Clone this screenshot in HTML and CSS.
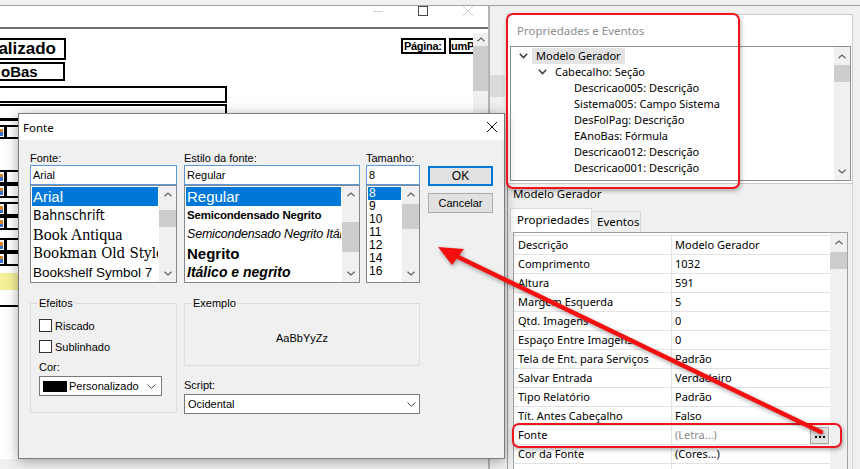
FILE: index.html
```html
<!DOCTYPE html>
<html lang="pt-BR">
<head>
<meta charset="utf-8">
<title>Fonte</title>
<link rel="stylesheet" href="styles.css">
</head>
<body>
<div class="screen">
  <div class="topstrip"></div>
  <div class="workspace">
    <section class="designer">
      <header class="win-title">
        <svg class="wc" viewBox="0 0 10 10"><line x1="0" y1="5.5" x2="10" y2="5.5"/></svg>
        <svg class="wc wc-max" viewBox="0 0 10 10"><rect x="0.5" y="0.5" width="9" height="9"/></svg>
        <svg class="wc" viewBox="0 0 10 10"><line x1="0" y1="0" x2="10" y2="10"/><line x1="10" y1="0" x2="0" y2="10"/></svg>
      </header>
      <div class="designer-body">
        <div class="canvas">
          <div class="fld f-title">alizado</div>
          <div class="fld f-sub">oBas</div>
          <div class="fld f-wide f-wide1"></div>
          <div class="fld f-wide f-wide2"></div>
          <div class="fld f-pag">Página:</div>
          <div class="fld f-ump">umP</div>
          <div class="fld f-ic r1"><i></i></div><div class="fld f-bx r1"></div>
          <div class="fld f-hline h1"></div>
          <div class="fld f-ic r2"><i></i></div><div class="fld f-bx r2"></div>
          <div class="fld f-ic r3"><i></i></div><div class="fld f-bx r3"></div>
          <div class="fld f-ic r4"><i></i></div><div class="fld f-bx r4"></div>
          <div class="fld f-ic r5"><i></i></div><div class="fld f-bx r5"></div>
          <div class="fld f-ic r6"><i></i></div><div class="fld f-bx r6"></div>
          <div class="fld f-ic r7"><i></i></div><div class="fld f-bx r7"></div>
          <div class="fld f-yellow"></div>
          <div class="fld f-hline h2"></div>
        </div>
        <div class="vscroll">
          <span class="sb-arrow d-arrow"><svg class="chev" viewBox="0 0 9 5"><polyline points="0.5,4.5 4.5,0.8 8.5,4.5"/></svg></span>
          <span class="sb-thumb d-thumb"></span>
        </div>
      </div>
      <div class="hscroll"></div>
    </section>

    <div class="gutter"><div class="gutter-band"></div></div>

    <aside class="props">
      <div class="pe-box">
        <div class="pe-title">Propriedades e Eventos</div>
        <div class="tree">
          <ul class="tree-list">
            <li class="tree-row lv0"><span class="tw"><svg class="tchev" viewBox="0 0 9 6"><polyline points="0.8,0.8 4.5,4.6 8.2,0.8"/></svg></span><span class="tree-label sel">Modelo Gerador</span></li>
            <li class="tree-row lv1"><span class="tw"><svg class="tchev" viewBox="0 0 9 6"><polyline points="0.8,0.8 4.5,4.6 8.2,0.8"/></svg></span><span class="tree-label">Cabecalho: Seção</span></li>
            <li class="tree-row lv2"><span class="tw"></span><span class="tree-label">Descricao005: Descrição</span></li>
            <li class="tree-row lv2"><span class="tw"></span><span class="tree-label">Sistema005: Campo Sistema</span></li>
            <li class="tree-row lv2"><span class="tw"></span><span class="tree-label">DesFolPag: Descrição</span></li>
            <li class="tree-row lv2"><span class="tw"></span><span class="tree-label">EAnoBas: Fórmula</span></li>
            <li class="tree-row lv2"><span class="tw"></span><span class="tree-label">Descricao012: Descrição</span></li>
            <li class="tree-row lv2"><span class="tw"></span><span class="tree-label">Descricao001: Descrição</span></li>
          </ul>
          <div class="sb tree-sb">
            <span class="sb-arrow t-arrow"><svg class="chev" viewBox="0 0 9 5"><polyline points="0.5,4.5 4.5,0.8 8.5,4.5"/></svg></span>
            <span class="sb-thumb t-thumb"></span>
            <span class="sb-fill"></span>
            <span class="sb-arrow t-arrow"><svg class="chev" viewBox="0 0 9 5"><polyline points="0.5,0.5 4.5,4.2 8.5,0.5"/></svg></span>
          </div>
        </div>
      </div>

      <div class="lower">
        <div class="sel-name">Modelo Gerador</div>
        <div class="tabs">
          <div class="tab active">Propriedades</div>
          <div class="tab">Eventos</div>
        </div>
        <div class="grid">
          <div class="pg-rows">
            <div class="pg-row"><span class="pg-name">Descrição</span><span class="pg-val">Modelo Gerador</span></div>
            <div class="pg-row"><span class="pg-name">Comprimento</span><span class="pg-val">1032</span></div>
            <div class="pg-row"><span class="pg-name">Altura</span><span class="pg-val">591</span></div>
            <div class="pg-row"><span class="pg-name">Margem Esquerda</span><span class="pg-val">5</span></div>
            <div class="pg-row"><span class="pg-name">Qtd. Imagens</span><span class="pg-val">0</span></div>
            <div class="pg-row"><span class="pg-name">Espaço Entre Imagens</span><span class="pg-val">0</span></div>
            <div class="pg-row"><span class="pg-name">Tela de Ent. para Serviços</span><span class="pg-val">Padrão</span></div>
            <div class="pg-row"><span class="pg-name">Salvar Entrada</span><span class="pg-val">Verdadeiro</span></div>
            <div class="pg-row"><span class="pg-name">Tipo Relatório</span><span class="pg-val">Padrão</span></div>
            <div class="pg-row"><span class="pg-name">Tít. Antes Cabeçalho</span><span class="pg-val">Falso</span></div>
            <div class="pg-row"><span class="pg-name">Fonte</span><span class="pg-val muted">(Letra...)<span class="dots"><i></i><i></i><i></i></span></span></div>
            <div class="pg-row"><span class="pg-name">Cor da Fonte</span><span class="pg-val">(Cores...)</span></div>
            <div class="pg-row"><span class="pg-name">Fixar Impressão</span><span class="pg-val">Normal</span></div>
          </div>
          <div class="sb pg-sb">
            <span class="sb-arrow p-arrow"><svg class="chev" viewBox="0 0 9 5"><polyline points="0.5,4.5 4.5,0.8 8.5,4.5"/></svg></span>
            <span class="sb-thumb p-thumb"></span>
          </div>
        </div>
      </div>
    </aside>
  </div>

  <div class="dialog">
    <div class="dlg-title">
      <span>Fonte</span>
      <svg class="dlg-close" viewBox="0 0 10 10"><line x1="0" y1="0" x2="10" y2="10"/><line x1="10" y1="0" x2="0" y2="10"/></svg>
    </div>
    <div class="dlg-body">
      <div class="dlg-top">
        <div class="col col-font">
          <div class="lbl">Fonte:</div>
          <div class="inp">Arial</div>
          <div class="list">
            <div class="items">
              <div class="it sel f-arial">Arial</div>
              <div class="it f-bahn">Bahnschrift</div>
              <div class="it f-antiqua">Book Antiqua</div>
              <div class="it f-bookman">Bookman Old Style</div>
              <div class="it f-bookshelf">Bookshelf Symbol 7</div>
            </div>
            <div class="sb lsb">
              <span class="sb-arrow l-arrow"><svg class="chev" viewBox="0 0 9 5"><polyline points="0.5,4.5 4.5,0.8 8.5,4.5"/></svg></span>
              <span class="sb-thumb lt-font"></span>
              <span class="sb-fill"></span>
              <span class="sb-arrow l-arrow"><svg class="chev" viewBox="0 0 9 5"><polyline points="0.5,0.5 4.5,4.2 8.5,0.5"/></svg></span>
            </div>
          </div>
        </div>
        <div class="col col-style">
          <div class="lbl">Estilo da fonte:</div>
          <div class="inp">Regular</div>
          <div class="list">
            <div class="items">
              <div class="it sel s-regular">Regular</div>
              <div class="it s-semi">Semicondensado Negrito</div>
              <div class="it s-semi-it">Semicondensado Negrito Itálico</div>
              <div class="it s-neg">Negrito</div>
              <div class="it s-it">Itálico e negrito</div>
            </div>
            <div class="sb lsb">
              <span class="sb-arrow l-arrow"><svg class="chev" viewBox="0 0 9 5"><polyline points="0.5,4.5 4.5,0.8 8.5,4.5"/></svg></span>
              <span class="sb-thumb lt-style"></span>
              <span class="sb-fill"></span>
              <span class="sb-arrow l-arrow"><svg class="chev" viewBox="0 0 9 5"><polyline points="0.5,0.5 4.5,4.2 8.5,0.5"/></svg></span>
            </div>
          </div>
        </div>
        <div class="col col-size">
          <div class="lbl">Tamanho:</div>
          <div class="inp">8</div>
          <div class="list list-size">
            <div class="items">
              <div class="it sel sz">8</div>
              <div class="it sz">9</div>
              <div class="it sz">10</div>
              <div class="it sz">11</div>
              <div class="it sz">12</div>
              <div class="it sz">14</div>
              <div class="it sz">16</div>
            </div>
            <div class="sb lsb">
              <span class="sb-arrow l-arrow"><svg class="chev" viewBox="0 0 9 5"><polyline points="0.5,4.5 4.5,0.8 8.5,4.5"/></svg></span>
              <span class="sb-thumb lt-size"></span>
              <span class="sb-fill"></span>
              <span class="sb-arrow l-arrow"><svg class="chev" viewBox="0 0 9 5"><polyline points="0.5,0.5 4.5,4.2 8.5,0.5"/></svg></span>
            </div>
          </div>
        </div>
        <div class="col col-btn">
          <div class="btn btn-ok">OK</div>
          <div class="btn">Cancelar</div>
        </div>
      </div>

      <div class="dlg-bottom">
        <fieldset class="grp grp-fx">
          <legend>Efeitos</legend>
          <div class="fx-body">
            <div class="check"><span class="cb"></span>Riscado</div>
            <div class="check check2"><span class="cb"></span>Sublinhado</div>
            <div class="cor-lbl">Cor:</div>
            <div class="combo combo-color"><span class="swatch"></span>Personalizado<svg class="schev" viewBox="0 0 9 5"><polyline points="0.5,0.5 4.5,4.3 8.5,0.5"/></svg></div>
          </div>
        </fieldset>
        <div class="col-ex">
          <fieldset class="grp grp-ex">
            <legend>Exemplo</legend>
            <div class="ex-body">AaBbYyZz</div>
          </fieldset>
          <div class="script-lbl">Script:</div>
          <div class="combo combo-script">Ocidental<svg class="schev" viewBox="0 0 9 5"><polyline points="0.5,0.5 4.5,4.3 8.5,0.5"/></svg></div>
        </div>
      </div>
    </div>
  </div>

  <div class="hl hl-tree"></div>
  <div class="hl hl-font"></div>
  <svg class="arrow" viewBox="0 0 860 469">
    <line x1="456" y1="256" x2="821" y2="432"/>
    <polygon points="438,247 464,249 452,265"/>
  </svg>
</div>
</body>
</html>
```

FILE: styles.css
```css
* { box-sizing: border-box; }
html, body { margin: 0; padding: 0; }
body {
  width: 860px; height: 469px; overflow: hidden;
  background: #f0f0f0;
  font-family: "Noto Sans", sans-serif;
  font-size: 11px; color: #000;
}
.screen { position: relative; width: 860px; height: 469px; overflow: hidden; }
.topstrip { height: 6px; background: #f0f0f0; border-bottom: 1px solid #a3a3a3; }
.workspace { display: flex; height: 463px; }

/* ---------- report designer window ---------- */
.designer {
  width: 490px; flex: none;
  display: flex; flex-direction: column;
  background: #fff; border-right: 2px solid #b4b4b4;
}
.win-title {
  height: 23px; flex: none;
  display: flex; justify-content: flex-end; gap: 35px;
  padding-right: 15px;
  border-bottom: 2px solid #6f6f6f; background: #fff;
}
.wc { width: 10px; height: 10px; fill: none; stroke: #d4d4d4; stroke-width: 1; }
.wc-max { stroke: #4a4a4a; }
.designer-body { flex: 1; display: flex; min-height: 0; }
.canvas { flex: 1; position: relative; overflow: hidden; background: #fff; }
.vscroll {
  width: 15px; flex: none; margin-top: 4px;
  background: #f0f0f0; display: flex; flex-direction: column;
}
.hscroll { height: 10px; flex: none; background: #f0f0f0; }

.fld {
  position: absolute; border: 2px solid #000; background: #fff;
  font-family: "Liberation Sans", Arial, sans-serif; font-weight: bold;
  white-space: nowrap; overflow: hidden;
}
.f-title { left: -4px; top: 9px; width: 70px; height: 22px; font-size: 17px; line-height: 18px; text-align: right; padding-right: 8px; }
.f-sub { left: -4px; top: 33px; width: 69px; height: 19px; font-size: 15px; line-height: 15px; padding-left: 3px; }
.f-wide { left: -4px; width: 231px; height: 17px; }
.f-wide1 { top: 57px; }
.f-wide2 { top: 75px; }
.f-pag { left: 401px; top: 9px; width: 45px; height: 16px; font-size: 11px; line-height: 12px; padding-left: 1px; letter-spacing: -0.3px; }
.f-ump { left: 449px; top: 9px; width: 40px; height: 16px; font-size: 11px; line-height: 12px; padding-left: 0; letter-spacing: -0.3px; }
.f-ic { left: -2px; width: 8px; height: 14px; }
.f-ic i {
  position: absolute; left: 0; top: 2px; width: 3px; height: 7px;
  background: linear-gradient(#d9822b 0 50%, #3a6fd0 50% 100%);
}
.f-bx { left: 5px; width: 40px; height: 14px; }
.r1 { top: 96px; }
.r2 { top: 141px; }
.r3 { top: 155px; }
.r4 { top: 173px; }
.r5 { top: 187px; }
.r6 { top: 209px; }
.r7 { top: 223px; }
.f-hline { left: 0; width: 40px; height: 0; border-width: 2px 0 0 0; }
.h1 { top: 89px; }
.h2 { top: 276px; }
.f-yellow { left: 0; top: 244px; width: 40px; height: 17px; border: none; background: #f5f19a; }

/* scrollbars */
.sb { flex: none; background: #f0f0f0; display: flex; flex-direction: column; }
.sb-arrow { display: flex; align-items: center; justify-content: center; flex: none; }
.sb-thumb { background: #cdcdcd; flex: none; }
.sb-fill { flex: 1; }
.chev { width: 8px; height: 5px; fill: none; stroke: #606060; stroke-width: 1.3; }
.d-arrow { height: 12px; }
.d-thumb { height: 45px; margin-top: 1px; }

.gutter { width: 15px; flex: none; background: #f0f0f0; padding-top: 69px; }
.gutter-band { height: 22px; background: #dadada; }

/* ---------- properties panel ---------- */
.props { flex: 1; min-width: 0; display: flex; flex-direction: column; padding: 8px 0 0 2px; }
.pe-box { width: 346px; flex: none; border: 1px solid #cbcbcb; background: #fff; }
.pe-title { height: 31px; line-height: 31px; padding-left: 9px; color: #8d8d8d; font-size: 11.5px; }
.tree { height: 135px; margin: 0 1px 2px 2px; border: 1px solid #8e8e8e; display: flex; }
.tree-list { flex: 1; list-style: none; margin: 0; padding: 1px 0 0; overflow: hidden; }
.tree-row { height: 16px; display: flex; align-items: center; white-space: nowrap; }
.lv0 { padding-left: 5px; }
.lv1 { padding-left: 24px; }
.lv2 { padding-left: 43px; }
.tw { width: 14px; flex: none; display: flex; justify-content: center; align-items: center; }
.tchev { width: 9px; height: 6px; fill: none; stroke: #3a3a3a; stroke-width: 1.5; }
.tree-label { margin-left: 2px; padding: 0 4px; line-height: 16px; font-size: 11px; }
.tree-label.sel { background: #e3e3e3; }
.tree-sb { width: 16px; }
.t-arrow { height: 18px; }
.t-thumb { height: 17px; }

.lower {
  flex: 1; width: 346px; min-height: 0;
  border-left: 1px solid #a0a0a0; border-right: 1px solid #d6d6d6;
  padding-left: 2px; display: flex; flex-direction: column;
}
.sel-name { height: 24px; line-height: 20px; padding-left: 3px; font-size: 11.5px; flex: none; }
.tabs { height: 24px; flex: none; display: flex; align-items: flex-end; }
.tab {
  height: 21px; width: 49px; padding-left: 5px;
  border: 1px solid #d9d9d9; border-bottom: none; border-left: none;
  background: #efefef; line-height: 20px; font-size: 11.5px;
}
.tab.active { height: 24px; width: 82px; background: #fff; padding-left: 6px; line-height: 22px; border-left: 1px solid #d9d9d9; }

.grid {
  flex: 1; min-height: 0; margin-left: 3px; width: 335px;
  border: 1px solid #a0a0a0; border-bottom: none;
  background: #fff; display: flex;
}
.pg-rows { flex: 1; min-width: 0; padding-top: 2px; overflow: hidden; }
.pg-row { display: grid; grid-template-columns: 158px 1fr; height: 19px; border-bottom: 1px solid #e2e2e2; }
.pg-row:first-child { border-top: 1px solid #e2e2e2; height: 20px; }
.pg-name { padding-left: 4px; border-right: 1px solid #e2e2e2; line-height: 18px; white-space: nowrap; overflow: hidden; }
.pg-val { padding-left: 3px; line-height: 18px; display: flex; align-items: center; white-space: nowrap; overflow: hidden; }
.pg-val.muted { color: #8a8a8a; }
.dots {
  margin-left: auto; margin-right: 1px;
  width: 19px; height: 17px; flex: none;
  border: 1px solid #a8a8a8; background: #e3e3e3;
  display: flex; align-items: flex-end; justify-content: center; gap: 2px;
  padding-bottom: 5px;
}
.dots i { width: 2px; height: 2px; background: #000; }
.pg-sb { width: 17px; }
.p-arrow { height: 19px; }
.p-thumb { height: 17px; }

/* ---------- font dialog ---------- */
.dialog {
  position: absolute; left: 18px; top: 113px; width: 487px; height: 346px;
  border: 1px solid #7c7c7c; background: #f0f0f0;
  box-shadow: 0 2px 12px rgba(0, 0, 0, 0.35);
  display: flex; flex-direction: column;
  font-family: "Liberation Sans", Arial, sans-serif; font-size: 11px;
}
.dlg-title {
  height: 26px; flex: none; background: #fff;
  display: flex; align-items: center; justify-content: space-between;
  padding: 0 7px 0 4px;
  font-family: "Noto Sans", sans-serif; font-size: 11.5px;
}
.dlg-close { width: 10px; height: 10px; stroke: #111; stroke-width: 1; }
.dlg-body { flex: 1; padding: 11px 0 0 11px; }
.dlg-top { display: flex; }
.col-font { width: 147px; }
.col-style { width: 176px; margin-left: 7px; }
.col-size { width: 54px; margin-left: 6px; }
.col-btn { width: 65px; margin-left: 8px; padding-top: 15px; display: flex; flex-direction: column; gap: 7px; }
.lbl { height: 14px; line-height: 14px; }
.inp { height: 20px; border: 1px solid #5b9bd9; background: #fff; padding-left: 2px; line-height: 18px; }
.list { height: 98px; border: 1px solid #828790; background: #fff; display: flex; }
.items { flex: 1; min-width: 0; padding: 1px; overflow: hidden; }
.it { height: 19px; line-height: 19px; padding-left: 1px; white-space: nowrap; overflow: hidden; }
.it.sel { background: #0078d7; color: #fff; }
.lsb { width: 17px; }
.l-arrow { height: 17px; }
.lt-font { height: 17px; margin-top: 7px; }
.lt-style { height: 30px; margin-top: 19px; }
.lt-size { height: 25px; margin-top: 1px; }

.f-arial { font-family: "Liberation Sans", sans-serif; font-size: 15px; }
.f-bahn { font-family: "DejaVu Sans Condensed", "DejaVu Sans", sans-serif; font-stretch: condensed; font-size: 14px; }
.f-antiqua { font-family: "Liberation Serif", serif; font-size: 16px; }
.f-bookman { font-family: "DejaVu Serif Condensed", "DejaVu Serif", serif; font-stretch: condensed; font-size: 15px; }
.f-bookshelf { font-family: "Liberation Sans", sans-serif; font-size: 13.5px; }
.s-regular { font-size: 15px; }
.s-semi { font-weight: bold; font-size: 11.5px; letter-spacing: -0.2px; }
.s-semi-it { font-style: italic; font-size: 12.5px; letter-spacing: -0.2px; }
.s-neg { font-weight: bold; font-size: 15px; }
.s-it { font-weight: bold; font-style: italic; font-size: 14px; }
.list-size .it { height: 13px; line-height: 13px; }
.sz { font-size: 12px; }
.list-size .it.sel { width: 33px; }

.btn {
  height: 20px; border: 1px solid #adadad; background: #e1e1e1;
  display: flex; align-items: center; justify-content: center;
}
.btn-ok { border: 2px solid #0078d7; font-size: 12px; }

.dlg-bottom { display: flex; gap: 7px; margin-top: 14px; }
.grp { margin: 0; border: 1px solid #dcdcdc; padding: 0 0 0 7px; min-width: 0; }
.grp legend { padding: 0 1px; line-height: 13px; font-size: 11px; }
.grp-fx { width: 147px; height: 116px; }
.fx-body { display: flex; flex-direction: column; margin-left: 1px; }
.check { display: flex; align-items: center; gap: 3px; height: 17px; margin-top: 7px; }
.check2 { margin-top: 4px; }
.cb { width: 13px; height: 13px; flex: none; border: 1px solid #333; background: #fff; }
.cor-lbl { margin-top: 5px; line-height: 14px; }
.combo { height: 20px; border: 1px solid #7a7a7a; background: #fff; display: flex; align-items: center; margin-top: 2px; }
.combo-color { width: 123px; }
.swatch { width: 24px; height: 11px; background: #000; margin: 0 2px 0 3px; flex: none; }
.schev { width: 9px; height: 5px; margin-left: auto; fill: none; stroke: #444; stroke-width: 1; }
.combo-color .schev { margin-right: 5px; }
.col-ex { display: flex; flex-direction: column; width: 236px; }
.grp-ex { width: 236px; height: 69px; }
.ex-body { height: 55px; margin-left: -7px; display: flex; align-items: center; justify-content: center; }
.script-lbl { margin-top: 12px; line-height: 14px; }
.combo-script { width: 236px; padding-left: 3px; }
.combo-script .schev { margin-right: 3px; }

/* ---------- annotations ---------- */
.hl {
  position: absolute; border: 2px solid #f0141e; border-radius: 7px;
  box-shadow: 1px 2px 4px rgba(0, 0, 0, 0.3); pointer-events: none;
}
.hl-tree { left: 506px; top: 13px; width: 234px; height: 176px; }
.hl-font { left: 512px; top: 423px; width: 330px; height: 25px; }
.arrow {
  position: absolute; left: 0; top: 0; width: 860px; height: 469px;
  pointer-events: none; filter: drop-shadow(1px 2px 2px rgba(0, 0, 0, 0.35));
}
.arrow line { stroke: #f51010; stroke-width: 4.5; stroke-linecap: round; }
.arrow polygon { fill: #f51010; }
```
